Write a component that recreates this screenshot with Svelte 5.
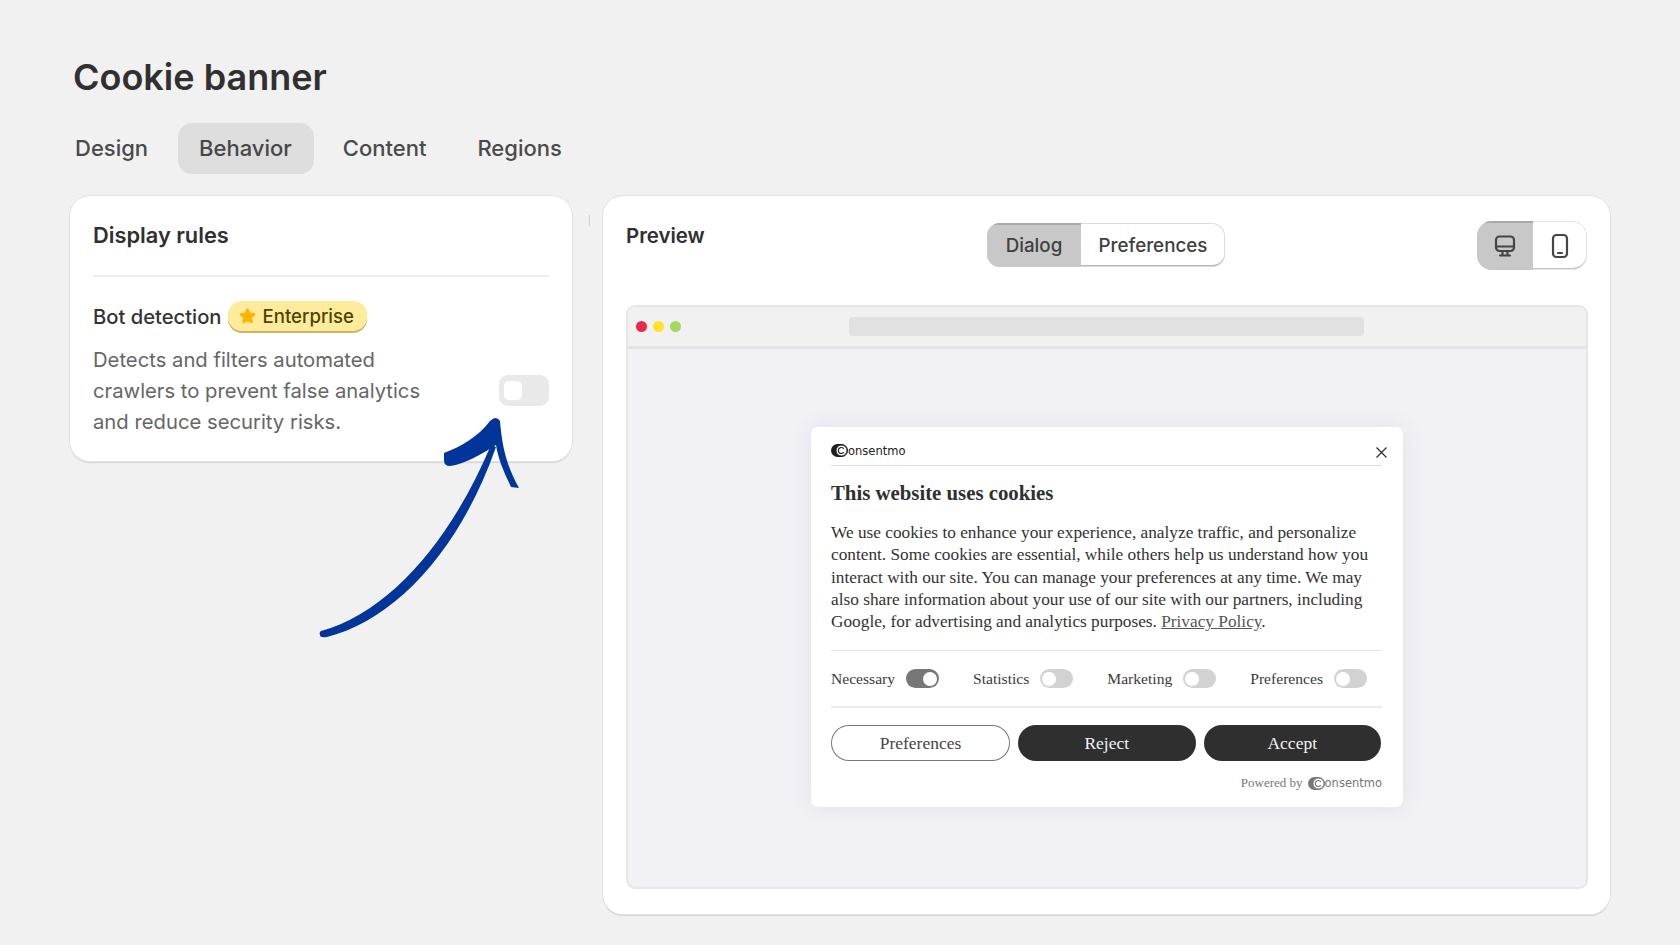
<script>
  const tabs = ['Design', 'Behavior', 'Content', 'Regions'];
  const consents = [
    { label: 'Necessary', on: true },
    { label: 'Statistics', on: false },
    { label: 'Marketing', on: false },
    { label: 'Preferences', on: false }
  ];
</script>

<div class="page">
  <h1>Cookie banner</h1>
  <nav class="tabs">
    {#each tabs as t}
      <span class="tab" class:active={t === 'Behavior'}>{t}</span>
    {/each}
  </nav>

  <div class="columns">
    <section class="card rules">
      <h2>Display rules</h2>
      <div class="rule-head">
        <span class="rule-name">Bot detection</span>
        <span class="badge">
          <svg width="17" height="17" viewBox="0 0 24 24"><path d="M12 1.8c.8 0 1.4.5 1.7 1.2l2.2 5 5.5.6c1.6.2 2.2 2.1 1 3.2l-4.1 3.6 1.2 5.3c.3 1.5-1.3 2.7-2.7 1.9L12 20.100l-4.800 2.800c-1.400.8-3-.4-2.700-1.900l1.200-5.300-4.100-3.600c-1.200-1.100-.6-3 1-3.200l5.500-.6 2.200-5c.3-.7.9-1.200 1.700-1.200z" fill="#ffb300"/></svg>
          Enterprise
        </span>
      </div>
      <div class="rule-body">
        <p>Detects and filters automated crawlers to prevent false analytics and reduce security risks.</p>
        <span class="big-toggle"><i></i></span>
      </div>
    </section>

    <div class="gutter"><i></i></div>

    <section class="card preview">
      <div class="preview-head">
        <h2>Preview</h2>
        <div class="seg">
          <span class="on">Dialog</span>
          <span>Preferences</span>
        </div>
        <div class="devices">
          <span class="on">
            <svg width="24" height="24" viewBox="0 0 24 24" fill="none" stroke="#454545" stroke-width="2.200" stroke-linejoin="round" stroke-linecap="round"><rect x="3" y="2.500" width="18" height="14.500" rx="3.500"/><path d="M3 12.500h18M9.500 17v4M14.500 17v4M7 21.500h10"/></svg>
          </span>
          <span>
            <svg width="24" height="26" viewBox="0 0 24 26" fill="none" stroke="#454545" stroke-width="2.200" stroke-linecap="round"><rect x="5" y="2" width="14" height="22" rx="3.500"/><path d="M10 20h4"/></svg>
          </span>
        </div>
      </div>

      <div class="browser">
        <div class="chrome">
          <div class="dots"><i class="r"></i><i class="y"></i><i class="g"></i></div>
          <div class="url"></div>
        </div>
        <div class="stage">
          <div class="dialog">
            <div class="dlg-top">
              <span class="logo">
                <svg width="17" height="13" viewBox="0 0 17 13"><rect x="0" y="0" width="17" height="13" rx="6.500" fill="#1d1d1d"/><circle cx="10.500" cy="6.500" r="5.500" fill="#fff" stroke="#1d1d1d" stroke-width="1"/><path d="M12.800 4.800a3 3 0 1 0 0 3.400" fill="none" stroke="#1d1d1d" stroke-width="1.200"/></svg>
                <span>onsentmo</span>
              </span>
              <svg class="close" width="13" height="13" viewBox="0 0 13 13" fill="none" stroke="#333" stroke-width="1.300"><path d="M1.500 1.500l10 10M11.500 1.500l-10 10"/></svg>
            </div>
            <h3>This website uses cookies</h3>
            <p class="copy">We use cookies to enhance your experience, analyze traffic, and personalize content. Some cookies are essential, while others help us understand how you interact with our site. You can manage your preferences at any time. We may also share information about your use of our site with our partners, including Google, for advertising and analytics purposes. <u>Privacy Policy</u>.</p>
            <div class="consents">
              {#each consents as c}
                <span class="consent">
                  {c.label}
                  <span class="mini" class:on={c.on}><i></i></span>
                </span>
              {/each}
            </div>
            <div class="actions">
              <span class="btn ghost">Preferences</span>
              <span class="btn">Reject</span>
              <span class="btn">Accept</span>
            </div>
            <div class="powered">
              Powered by
              <span class="logo muted">
                <svg width="17" height="13" viewBox="0 0 17 13"><rect x="0" y="0" width="17" height="13" rx="6.500" fill="#777"/><circle cx="10.500" cy="6.500" r="5.500" fill="#fff" stroke="#777" stroke-width="1"/><path d="M12.800 4.800a3 3 0 1 0 0 3.400" fill="none" stroke="#777" stroke-width="1.200"/></svg>
                <span>onsentmo</span>
              </span>
            </div>
          </div>
        </div>
      </div>
    </section>
  </div>

  <svg class="arrow" width="1680" height="945" viewBox="0 0 1680 945" fill="#02359a">
    <path d="M321 631C390 612 451 540 491 445L496 447C460 550 395 620 327 637Q320 638 320 635Q319 632 321 631Z"/>
    <path d="M444 453C460 447 478 437 490 421Q496 415 500 421C502 445 506 465 519 488L511 487C503 470 498 458 496 445C480 455 465 464 450 466Q444 466 444 460Z"/>
  </svg>
</div>

<style>
  :global(body) { margin: 0; background: #f1f1f1; }
  .page {
    position: relative;
    width: 1680px;
    height: 945px;
    box-sizing: border-box;
    padding: 54px 70px 0;
    font-family: Inter, "Liberation Sans", sans-serif;
    color: #333;
    overflow: hidden;
  }
  h1 { margin: -1px 0 0 3px; font-size: 36px; line-height: 48px; font-weight: 600; color: #303030; }
  .tabs { display: flex; gap: 0; margin-top: 22px; height: 51px; }
  .tab {
    display: flex; align-items: center; padding-bottom: 2px; box-sizing: border-box;
    border-radius: 14px;
    font-size: 22px; font-weight: 500; color: #4a4a4a;
  }
  .tab:nth-child(1) { padding-left: 5px; padding-right: 30px; }
  .tab:nth-child(2) { padding-left: 21px; padding-right: 22px; }
  .tab:nth-child(3) { padding-left: 29px; padding-right: 51px; }
  .tab.active { background: #dedede; color: #474747; }

  .columns { display: grid; grid-template-columns: 502px 31px 1007px; margin-top: 22px; align-items: start; }
  .card {
    background: #fff; border-radius: 20px; box-sizing: border-box;
    box-shadow: 0 0 0 1px #e2e2e2, 0 2px 1px rgba(0,0,0,.12);
  }
  h2 { margin: 0; font-size: 22px; line-height: 28px; font-weight: 600; color: #303030; }
  .rules { height: 265px; padding: 25px 23px 0; }
  .rules h2 { padding-bottom: 26px; border-bottom: 2px solid #ededed; font-size: 21.800px; }
  .rule-head { display: flex; align-items: center; gap: 6px; margin-top: 24px; height: 32px; }
  .rule-name { font-size: 20.200px; font-weight: 500; color: #333; position: relative; top: -1px; }
  .badge {
    display: inline-flex; align-items: center; gap: 7px;
    height: 30px; padding: 0 13px 0 11px; border-radius: 14px;
    background: #ffeb9c; box-shadow: 0 2px 0 #c9b568;
    font-size: 18.600px; font-weight: 500; color: #4f4300;
    margin-top: -3px;
  }
  .rule-body { display: flex; align-items: center; justify-content: space-between; margin-top: 11px; }
  .rule-body p { margin: 0; width: 340px; font-size: 20.250px; line-height: 31px; color: #666; }
  .big-toggle {
    display: flex; align-items: center; width: 50px; height: 31px; box-sizing: border-box;
    padding-left: 5px; border-radius: 9px; background: #e9e9e9;
  }
  .big-toggle i { width: 18px; height: 19px; border-radius: 5px; background: #fff; }

  .gutter { display: flex; justify-content: center; padding-top: 19px; }
  .gutter i { width: 1px; height: 11px; background: #d0d0d0; margin-left: 3px; }

  .preview { height: 718px; padding: 0 22px 0 23px; }
  .preview-head { position: relative; display: flex; align-items: flex-start; height: 109px; }
  .preview-head h2 { margin-top: 26px; width: 361px; font-size: 20.400px; }
  .seg {
    display: flex; margin-top: 27px; height: 44px; width: 238px; box-sizing: border-box;
    border-radius: 13px; overflow: hidden;
    box-shadow: inset 0 0 0 1px #dcdcdc, inset 0 -2px 0 #b5b5b5;
    font-size: 18.800px; font-weight: 500; color: #404040;
  }
  .seg span { display: flex; align-items: center; justify-content: center; flex: 1; }
  .seg .on { flex: 0 0 94px; background: #c8c8c8; box-shadow: inset 0 2px 0 #a9a9a9; }
  .devices {
    display: flex; margin: 25px 1px 0 auto; width: 110px; height: 49px; box-sizing: border-box;
    border-radius: 15px; overflow: hidden; box-shadow: inset 0 0 0 1px #e3e3e3, inset 0 -2px 0 #c5c5c5;
  }
  .devices span { display: flex; align-items: center; justify-content: center; flex: 1; }
  .devices .on { flex: 0 0 56px; background: #c8c8c8; box-shadow: inset 0 2px 0 #a9a9a9; }

  .browser {
    height: 584px; box-sizing: border-box; border: 2px solid #e6e6e6; border-radius: 9px;
    display: flex; flex-direction: column; overflow: hidden; background: #f1f1f6;
  }
  .chrome {
    flex: 0 0 39px; display: flex; align-items: center; position: relative;
    background: #f1f1f1; border-bottom: 3px solid #e4e4e4;
  }
  .dots { display: flex; gap: 6px; margin-left: 8px; }
  .dots i { width: 11px; height: 11px; border-radius: 50%; }
  .r { background: #e8294f; } .y { background: #ffe12e; } .g { background: #a3d95c; }
  .url { width: 515px; height: 19px; margin-left: 168px; border-radius: 4px; background: #e1e1e1; }
  .stage { flex: 1; display: flex; justify-content: center; padding-top: 78px; padding-right: 0; }

  .dialog {
    width: 592px; height: 380px; box-sizing: border-box; padding: 0 21px 0 20px;
    background: #fff; border-radius: 7px; box-shadow: 0 0 22px rgba(90,90,140,.1);
    font-family: "Liberation Serif", serif; color: #333;
    display: flex; flex-direction: column;
  }
  .dlg-top {
    position: relative; display: flex; align-items: center; height: 39px; flex: none;
    border-bottom: 1px solid #dcdcdc; box-sizing: border-box; padding-top: 9px;
  }
  .logo { display: inline-flex; align-items: center; font-family: "DejaVu Sans", sans-serif; font-size: 11.500px; color: #222; }
  .logo.muted { color: #777; font-size: 11.500px; }
  .close { position: absolute; right: -6px; top: 19px; }
  h3 { margin: 14px 0 0; font-size: 20.800px; line-height: 26px; font-weight: 700; color: #303030; }
  .copy { margin: 16px 0 0; font-size: 17.300px; line-height: 22.250px; color: #333; }
  .copy u { color: #555; }
  .consents {
    display: flex; justify-content: space-between; align-items: center;
    margin-top: 17px; height: 58px; padding-right: 15px;
    border-top: 1px solid #e3e3e3; border-bottom: 2px solid #ececec; box-sizing: border-box;
    font-size: 15.600px; color: #3a3a3a;
  }
  .consent { display: flex; align-items: center; gap: 11px; }
  .mini {
    display: flex; align-items: center; width: 33px; height: 19px; padding: 0 2px; box-sizing: border-box;
    border-radius: 10px; background: #d2d2d2;
  }
  .mini i { width: 14px; height: 14px; border-radius: 50%; background: #fff; }
  .mini.on { background: #777; justify-content: flex-end; }
  .actions { display: flex; gap: 8px; margin-top: 17px; margin-right: 1px; }
  .btn {
    flex: 1; height: 36px; display: flex; align-items: center; justify-content: center;
    border-radius: 18px; background: #2f2f2f; color: #f4f4f4; font-size: 17.500px;
  }
  .btn.ghost { flex: 0 0 179px; background: #fff; color: #444; box-shadow: inset 0 0 0 1px #777; }
  .powered {
    display: flex; justify-content: flex-end; align-items: center; gap: 5px;
    margin-top: 14px; font-size: 13px; color: #777;
  }
  .arrow { position: absolute; left: 0; top: 0; pointer-events: none; }
</style>
